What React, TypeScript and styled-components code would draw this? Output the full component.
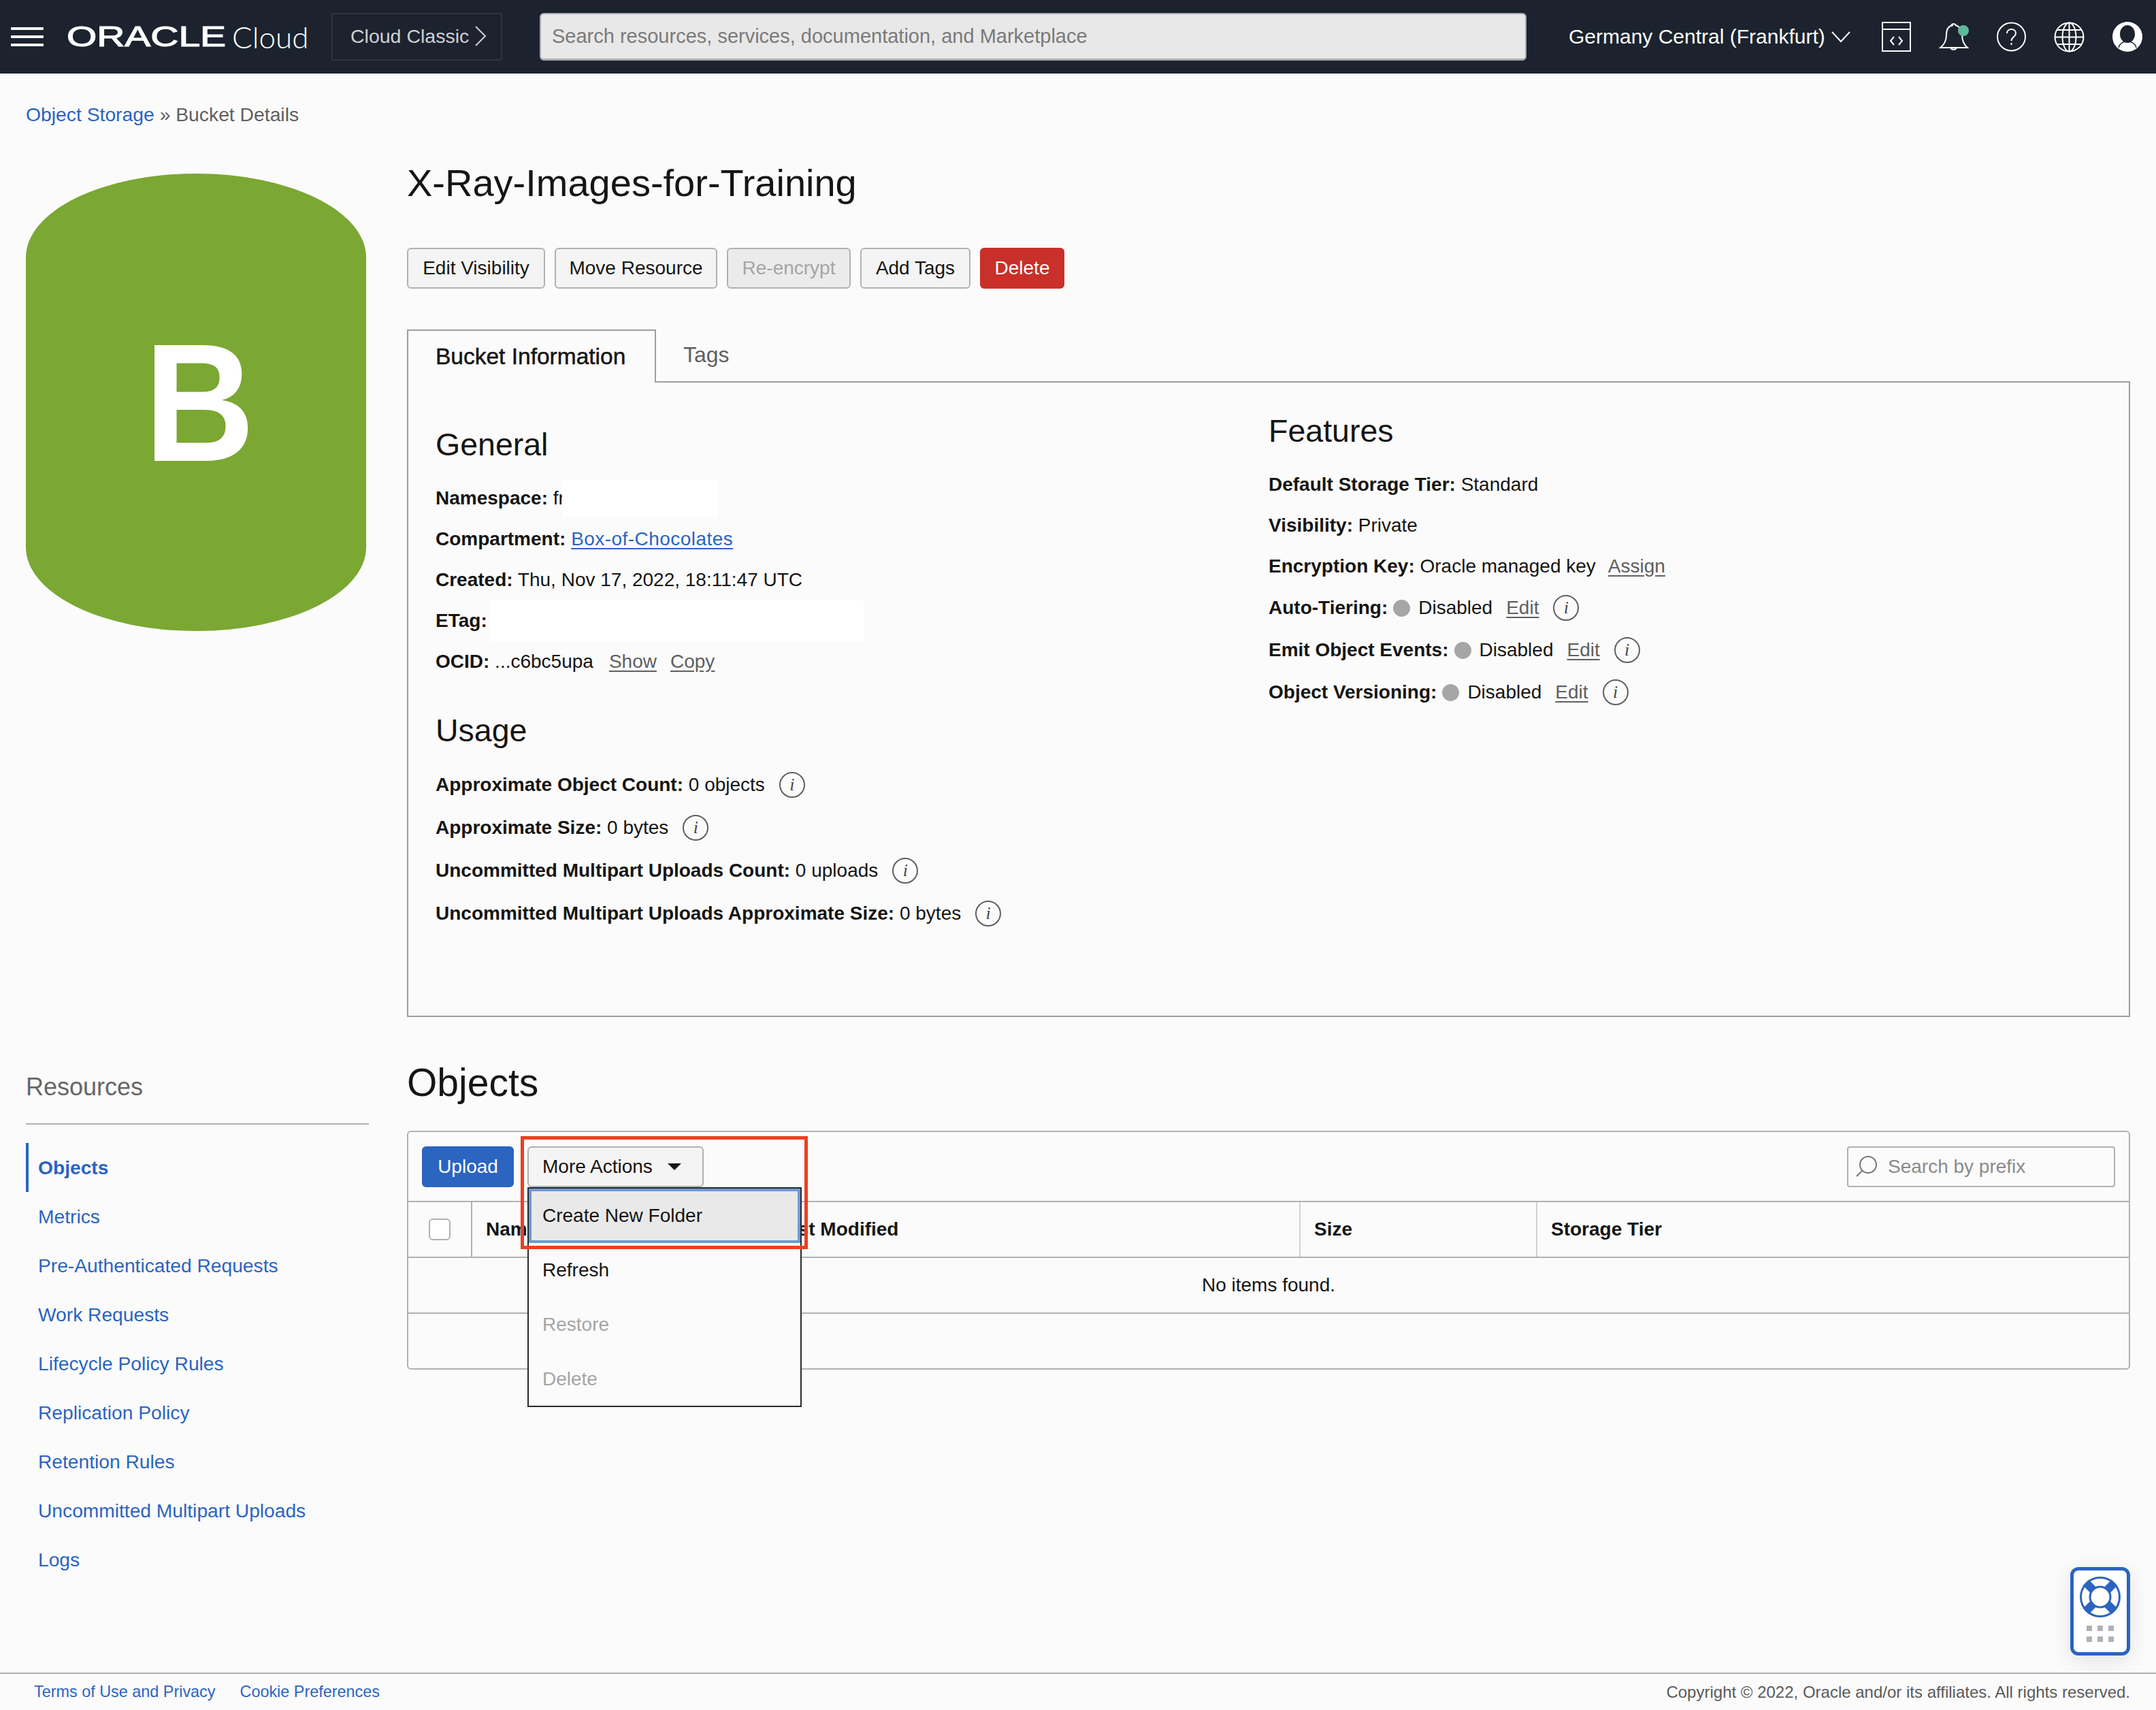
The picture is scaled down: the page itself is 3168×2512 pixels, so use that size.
import styled, { createGlobalStyle } from 'styled-components'

const GlobalStyle = createGlobalStyle`
  html, body {
    margin: 0;
    padding: 0;
    background: #fbfbfb;
  }
  body {
    font-family: "Liberation Sans", Arial, sans-serif;
    font-size: 28px;
    color: #161513;
  }
  * {
    box-sizing: border-box;
  }
`

const Page = styled.div`
  width: 3168px;
  height: 2512px;
  display: flex;
  flex-direction: column;
  position: relative;
  overflow: hidden;
`

const Header = styled.header`
  height: 108px;
  flex: none;
  background: #1c232e;
  display: flex;
  align-items: center;
  padding-left: 16px;
  color: #fff;
`

const Hamburger = styled.div`
  width: 48px;
  height: 28px;
  display: flex;
  flex-direction: column;
  justify-content: space-between;
  margin-right: 34px;

  span {
    display: block;
    height: 4px;
    border-radius: 1px;
    background: #fff;
  }
`

const Logo = styled.div`
  width: 243px;
  flex: none;

  span {
    display: inline-block;
    font-size: 42px;
    line-height: 42px;
    -webkit-text-stroke: 1.2px #fff;
    transform: scale(1.355, 1);
    transform-origin: left center;
  }
`

const LogoCloud = styled.div`
  width: 146px;
  flex: none;
  font-size: 44px;
  line-height: 44px;
  font-family: "Lato", "Liberation Sans", sans-serif;
  font-weight: 300;
`

const ClassicButton = styled.div`
  width: 251px;
  height: 70px;
  flex: none;
  border: 2px solid #2e3440;
  border-radius: 3px;
  display: flex;
  align-items: center;
  gap: 8px;
  padding-left: 26px;
  padding-bottom: 2px;
  font-size: 28.500px;
  color: #cfd0d2;
  margin-right: 55px;
`

const GlobalSearch = styled.input`
  width: 1450px;
  height: 70px;
  flex: none;
  background: #e8e8e8;
  border: 2px solid #a9adb3;
  border-bottom-width: 3px;
  border-radius: 6px;
  padding: 0 16px;
  font-family: inherit;
  font-size: 29px;
  margin-right: 62px;

  &::placeholder {
    color: #7a7a7a;
    opacity: 1;
  }
`

const Region = styled.div`
  display: flex;
  align-items: center;
  gap: 8px;
  font-size: 30px;
  white-space: nowrap;
  width: 460px;
  flex: none;
`

const HeaderIcon = styled.svg`
  flex: none;
  display: block;
`

const IconRow = styled.div`
  display: flex;
  align-items: center;
  gap: 41px;
`

const BellWrap = styled.div`
  position: relative;
  width: 44px;
  height: 46px;
`

const BellDot = styled.span`
  position: absolute;
  right: 0;
  top: 6px;
  width: 16px;
  height: 16px;
  border-radius: 50%;
  background: #5db89c;
`

const Crumbs = styled.div`
  height: 120px;
  flex: none;
  display: flex;
  align-items: center;
  padding-left: 38px;
  color: #5f5f5f;
  white-space: pre;
  font-size: 28.300px;
`

const Link = styled.a<{ $tone?: 'blue' | 'grey'; $under?: boolean; $gap?: number }>`
  color: ${props => (props.$tone === 'grey' ? '#5f5f5f' : '#2b64c1')};
  text-decoration: ${props => (props.$under ? 'underline' : 'none')};
  text-underline-offset: 4px;
  margin-left: ${props => props.$gap ?? 0}px;
`

const CompartmentLink = styled(Link)`
  letter-spacing: 0.45px;
`

const Columns = styled.div`
  flex: 1;
  display: flex;
  min-height: 0;
`

const Side = styled.aside`
  width: 598px;
  flex: none;
  padding-left: 38px;
`

const Cylinder = styled.div`
  width: 500px;
  height: 672px;
  margin-top: 27px;
  background: #7ba733;
  border-radius: 250px / 123px;
  display: flex;
  align-items: center;
  justify-content: center;
  color: #fff;
  font-size: 247px;
  font-weight: 700;
  line-height: 1;
  padding-left: 10px;

  span {
    display: block;
    transform: scaleX(0.91);
  }
`

const ResourcesTitle = styled.div`
  margin-top: 645px;
  width: 504px;
  height: 80px;
  padding-bottom: 28px;
  border-bottom: 2px solid #aeb1b6;
  display: flex;
  align-items: center;
  font-size: 36px;
  color: #666;
`

const SideNav = styled.nav`
  margin-top: 27px;
  display: flex;
  flex-direction: column;
`

const SideItem = styled.a<{ $active?: boolean }>`
  height: 72px;
  display: flex;
  align-items: center;
  padding-left: 14px;
  border-left: 4px solid ${props => (props.$active ? '#2b64c1' : 'transparent')};
  color: #2b64c1;
  font-size: 28.200px;
  font-weight: ${props => (props.$active ? 700 : 400)};
`

const Main = styled.main`
  width: 2532px;
  flex: none;
`

const PageTitle = styled.h1`
  margin: 0;
  height: 80px;
  display: flex;
  align-items: center;
  font-size: 56px;
  font-weight: 400;
`

const Actions = styled.div`
  margin-top: 56px;
  display: flex;
  gap: 14px;
`

const Button = styled.button<{ $kind?: 'plain' | 'danger' | 'primary' | 'disabled'; $w: number }>`
  width: ${props => props.$w}px;
  height: 60px;
  flex: none;
  padding: 0;
  font-family: inherit;
  font-size: 28px;
  border-radius: 6px;
  border: 2px solid
    ${props =>
      props.$kind === 'danger' ? '#c9302a' : props.$kind === 'primary' ? '#2b64c1' : '#aeb1b6'};
  background: ${props =>
    props.$kind === 'danger'
      ? '#c9302a'
      : props.$kind === 'primary'
        ? '#2b64c1'
        : props.$kind === 'disabled'
          ? '#ebebeb'
          : '#f4f4f4'};
  color: ${props =>
    props.$kind === 'danger' || props.$kind === 'primary'
      ? '#fff'
      : props.$kind === 'disabled'
        ? '#a5a5a5'
        : '#161513'};
`

const Tabs = styled.div`
  margin-top: 60px;
  height: 78px;
  display: flex;
`

const ActiveTab = styled.div`
  width: 366px;
  height: 78px;
  border: 2px solid #9e9e9e;
  border-bottom: 0;
  display: flex;
  align-items: center;
  padding-left: 40px;
  font-size: 33.500px;
  -webkit-text-stroke: 0.5px #161513;
  position: relative;
  z-index: 1;
  background: #fbfbfb;
`

const IdleTab = styled.div`
  flex: 1;
  border-bottom: 2px solid #9e9e9e;
  display: flex;
  align-items: center;
  padding: 0 0 2px 40px;
  font-size: 32px;
  color: #5f5f5f;
`

const Panel = styled.section`
  height: 932px;
  border: 2px solid #9e9e9e;
  border-top: 0;
  display: grid;
  grid-template-columns: 1224px 1fr;
  padding-left: 40px;
`

const Col = styled.div<{ $top: number }>`
  padding-top: ${props => props.$top}px;
`

const SectionTitle = styled.h3<{ $top?: number }>`
  margin: ${props => props.$top ?? 0}px 0 0;
  height: 60px;
  display: flex;
  align-items: center;
  font-size: 46.500px;
  font-weight: 400;
`

const Rows = styled.div<{ $top: number }>`
  margin-top: ${props => props.$top}px;
`

const Row = styled.div<{ $h: number }>`
  height: ${props => props.$h}px;
  display: flex;
  align-items: center;
  position: relative;
`

const RowText = styled.span`
  white-space: pre;
`

const Mask = styled.span<{ $left: number; $w: number; $h: number }>`
  position: absolute;
  left: ${props => props.$left}px;
  width: ${props => props.$w}px;
  height: ${props => props.$h}px;
  top: 50%;
  transform: translateY(-50%);
  background: #fff;
`

const Dot = styled.span`
  width: 25px;
  height: 25px;
  border-radius: 50%;
  background: #a6a6a6;
  margin: 0 12px 0 8px;
  flex: none;
`

const Info = styled.span`
  width: 38px;
  height: 38px;
  border: 2px solid #5f5f5f;
  border-radius: 50%;
  margin-left: 21px;
  display: inline-flex;
  align-items: center;
  justify-content: center;
  font-family: "Liberation Serif", serif;
  font-style: italic;
  font-size: 26px;
  color: #444;
  flex: none;
`

const ObjectsTitle = styled.h2`
  margin: 56px 0 0;
  height: 80px;
  display: flex;
  align-items: center;
  font-size: 57px;
  font-weight: 400;
`

const Card = styled.section`
  margin-top: 31px;
  height: 351px;
  border: 2px solid #aeb1b6;
  border-radius: 6px;
`

const Toolbar = styled.div`
  height: 103px;
  border-bottom: 2px solid #aeb1b6;
  display: flex;
  align-items: center;
  gap: 20px;
  padding: 0 20px;
`

const MenuAnchor = styled.div`
  position: relative;
  z-index: 3;
`

const MoreButton = styled(Button)`
  display: flex;
  align-items: center;
  justify-content: flex-start;
  gap: 22px;
  padding-left: 20px;
`

const Caret = styled.span`
  width: 0;
  height: 0;
  border-left: 10px solid transparent;
  border-right: 10px solid transparent;
  border-top: 10px solid #161513;
`

const Menu = styled.div`
  position: absolute;
  left: 0;
  top: 60px;
  width: 403px;
  height: 323px;
  background: #fbfbfb;
  border: 2px solid #2a2a2a;
`

const MenuItem = styled.div<{ $focus?: boolean; $off?: boolean }>`
  height: 80px;
  display: flex;
  align-items: center;
  padding-left: ${props => (props.$focus ? 16 : 20)}px;
  background: ${props => (props.$focus ? '#e9e9e9' : 'transparent')};
  border: ${props => (props.$focus ? '4px solid #6f97d6' : '0')};
  color: ${props => (props.$off ? '#a5a5a5' : '#161513')};
`

const Callout = styled.div`
  position: absolute;
  left: -10px;
  top: -15px;
  width: 422px;
  height: 166px;
  border: 5px solid #ea4020;
  pointer-events: none;
`

const PrefixSearch = styled.div`
  margin-left: auto;
  width: 394px;
  height: 60px;
  border: 2px solid #aeb1b6;
  border-radius: 4px;
  display: flex;
  align-items: center;
  gap: 14px;
  padding-left: 10px;
  color: #8a8a8a;
`

const TableHead = styled.div`
  height: 82px;
  border-bottom: 2px solid #aeb1b6;
  display: grid;
  grid-template-columns: 94px 426px 791px 348px 1fr;
  font-weight: 700;
`

const HeadCell = styled.div`
  display: flex;
  align-items: center;
  padding-left: 20px;
  border-right: 2px solid #d0d2d5;

  &:last-child {
    border-right: 0;
  }
`

const CheckCell = styled(HeadCell)`
  justify-content: center;
  padding-left: 0;
  border-right-color: #aeb1b6;
`

const Checkbox = styled.span`
  width: 32px;
  height: 32px;
  border: 2px solid #aeb1b6;
  border-radius: 6px;
  background: #fff;
`

const EmptyRow = styled.div`
  height: 82px;
  border-bottom: 2px solid #aeb1b6;
  display: flex;
  align-items: center;
  justify-content: center;
`

const Footer = styled.footer`
  height: 55px;
  flex: none;
  border-top: 2px solid #aeb1b6;
  display: flex;
  align-items: center;
  gap: 36px;
  padding: 0 38px 0 50px;
  font-size: 23.400px;
  color: #5a5a5a;
`

const Copyright = styled.span`
  margin-left: auto;
  font-size: 24px;
`

const HelpWidget = styled.div`
  position: absolute;
  left: 3042px;
  top: 2302px;
  width: 88px;
  height: 130px;
  background: #fff;
  border: 5px solid #2b64c1;
  border-radius: 12px;
  box-shadow: 0 8px 30px rgba(0, 0, 0, 0.1);
  display: flex;
  flex-direction: column;
  align-items: center;
  padding-top: 9px;
`

const Grip = styled.div`
  margin-top: 12px;
  display: grid;
  grid-template-columns: repeat(3, 8px);
  gap: 8px;

  span {
    height: 8px;
    background: #aeb1b6;
  }
`

function CodeIcon() {
  return (
    <HeaderIcon width="43" height="44" viewBox="0 0 43 44" fill="none" stroke="#fff" strokeWidth="2">
      <rect x="1" y="1" width="41" height="42" />
      <path d="M1 11h41" />
      <path d="M18 22l-5 6 5 6M25 22l5 6-5 6" />
    </HeaderIcon>
  )
}

function BellIcon() {
  return (
    <HeaderIcon width="44" height="46" viewBox="0 0 44 46" fill="none" stroke="#fff" strokeWidth="2">
      <path d="M21 6c-7 1-10 7-10 14 0 8-2 14-9 19h40c-6-5-8-11-8-19 0-7-4-13-10-14" />
      <path d="M18 6a4 4 0 0 1 7 0M17 39a5 5 0 0 0 9 0" />
    </HeaderIcon>
  )
}

function HelpIcon() {
  return (
    <HeaderIcon width="43" height="44" viewBox="0 0 43 44" fill="none" stroke="#fff" strokeWidth="2">
      <circle cx="21.5" cy="22" r="20.5" />
      <path d="M15 17c0-4 3-6 6.500-6s6.500 2 6.500 6c0 5-6.500 5-6.500 11" />
      <path d="M21.500 31v3" />
    </HeaderIcon>
  )
}

function GlobeIcon() {
  return (
    <HeaderIcon width="45" height="45" viewBox="0 0 45 45" fill="none" stroke="#fff" strokeWidth="2">
      <circle cx="22.500" cy="22.500" r="21" />
      <ellipse cx="22.500" cy="22.500" rx="10" ry="21" />
      <path d="M22.500 1.500v42M1.500 22.500h42M4.500 12h36M4.500 33h36" />
    </HeaderIcon>
  )
}

function UserIcon() {
  return (
    <HeaderIcon width="44" height="44" viewBox="0 0 44 44">
      <circle cx="22" cy="22" r="22" fill="#fff" />
      <ellipse cx="22" cy="18" rx="11" ry="13" fill="#1c232e" />
      <path d="M9 38c2-7 8-9 13-9s11 2 13 9" fill="none" stroke="#1c232e" strokeWidth="1.500" />
    </HeaderIcon>
  )
}

function Lifebuoy() {
  return (
    <svg width="60" height="60" viewBox="0 0 60 60" fill="none" stroke="#2b64c1">
      <path d="M9 9l42 42M51 9L9 51" strokeWidth="12" />
      <circle cx="30" cy="30" r="28.500" strokeWidth="3" />
      <circle cx="30" cy="30" r="15" strokeWidth="3" fill="#fff" />
    </svg>
  )
}

function Magnifier() {
  return (
    <svg width="34" height="34" viewBox="0 0 34 34" fill="none" stroke="#777" strokeWidth="2">
      <circle cx="19" cy="14" r="12" />
      <path d="M10.500 22.500L2 31" />
    </svg>
  )
}

const features = [
  { label: 'Auto-Tiering:' },
  { label: 'Emit Object Events:' },
  { label: 'Object Versioning:' },
]

const usage = [
  { label: 'Approximate Object Count:', value: '0 objects' },
  { label: 'Approximate Size:', value: '0 bytes' },
  { label: 'Uncommitted Multipart Uploads Count:', value: '0 uploads' },
  { label: 'Uncommitted Multipart Uploads Approximate Size:', value: '0 bytes' },
]

const resources = [
  'Objects',
  'Metrics',
  'Pre-Authenticated Requests',
  'Work Requests',
  'Lifecycle Policy Rules',
  'Replication Policy',
  'Retention Rules',
  'Uncommitted Multipart Uploads',
  'Logs',
]

export default function App() {
  return (
    <Page>
      <GlobalStyle />
      <Header>
        <Hamburger>
          <span />
          <span />
          <span />
        </Hamburger>
        <Logo>
          <span>ORACLE</span>
        </Logo>
        <LogoCloud>Cloud</LogoCloud>
        <ClassicButton>
          Cloud Classic
          <svg width="18" height="30" viewBox="0 0 18 30" fill="none" stroke="#cfd0d2" strokeWidth="2">
            <path d="M2 1l14 14L2 29" />
          </svg>
        </ClassicButton>
        <GlobalSearch placeholder="Search resources, services, documentation, and Marketplace" />
        <Region>
          Germany Central (Frankfurt)
          <svg width="30" height="18" viewBox="0 0 30 18" fill="none" stroke="#fff" strokeWidth="2">
            <path d="M2 2l13 14L28 2" />
          </svg>
        </Region>
        <IconRow>
          <CodeIcon />
          <BellWrap>
            <BellIcon />
            <BellDot />
          </BellWrap>
          <HelpIcon />
          <GlobeIcon />
          <UserIcon />
        </IconRow>
      </Header>

      <Crumbs>
        <Link>Object Storage</Link> » Bucket Details
      </Crumbs>

      <Columns>
        <Side>
          <Cylinder>
            <span>B</span>
          </Cylinder>
          <ResourcesTitle>Resources</ResourcesTitle>
          <SideNav>
            {resources.map((item, i) => (
              <SideItem key={item} $active={i === 0}>
                {item}
              </SideItem>
            ))}
          </SideNav>
        </Side>

        <Main>
          <PageTitle>X-Ray-Images-for-Training</PageTitle>
          <Actions>
            <Button $w={203}>Edit Visibility</Button>
            <Button $w={239}>Move Resource</Button>
            <Button $w={182} $kind="disabled">Re-encrypt</Button>
            <Button $w={162}>Add Tags</Button>
            <Button $w={124} $kind="danger">Delete</Button>
          </Actions>

          <Tabs>
            <ActiveTab>Bucket Information</ActiveTab>
            <IdleTab>Tags</IdleTab>
          </Tabs>
          <Panel>
            <Col $top={61}>
              <SectionTitle>General</SectionTitle>
              <Rows $top={19}>
                <Row $h={60}>
                  <RowText>
                    <b>Namespace:</b> fr
                  </RowText>
                  <Mask $left={186} $w={229} $h={54} />
                </Row>
                <Row $h={60}>
                  <RowText>
                    <b>Compartment:</b> <CompartmentLink $under>Box-of-Chocolates</CompartmentLink>
                  </RowText>
                </Row>
                <Row $h={60}>
                  <RowText>
                    <b>Created:</b> Thu, Nov 17, 2022, 18:11:47 UTC
                  </RowText>
                </Row>
                <Row $h={60}>
                  <RowText>
                    <b>ETag:</b>
                  </RowText>
                  <Mask $left={80} $w={549} $h={61} />
                </Row>
                <Row $h={60}>
                  <RowText>
                    <b>OCID:</b> ...c6bc5upa
                    <Link $tone="grey" $under $gap={23}>Show</Link>
                    <Link $tone="grey" $under $gap={20}>Copy</Link>
                  </RowText>
                </Row>
              </Rows>
              <SectionTitle $top={41}>Usage</SectionTitle>
              <Rows $top={18}>
                {usage.map(row => (
                  <Row $h={63} key={row.label}>
                    <RowText>
                      <b>{row.label}</b> {row.value}
                    </RowText>
                    <Info>i</Info>
                  </Row>
                ))}
              </Rows>
            </Col>
            <Col $top={41}>
              <SectionTitle>Features</SectionTitle>
              <Rows $top={19}>
                <Row $h={60}>
                  <RowText>
                    <b>Default Storage Tier:</b> Standard
                  </RowText>
                </Row>
                <Row $h={60}>
                  <RowText>
                    <b>Visibility:</b> Private
                  </RowText>
                </Row>
                <Row $h={60}>
                  <RowText>
                    <b>Encryption Key:</b> Oracle managed key
                    <Link $tone="grey" $under $gap={18}>Assign</Link>
                  </RowText>
                </Row>
                {features.map(row => (
                  <Row $h={62} key={row.label}>
                    <b>{row.label}</b>
                    <Dot />
                    <RowText>
                      Disabled
                      <Link $tone="grey" $under $gap={20}>Edit</Link>
                    </RowText>
                    <Info>i</Info>
                  </Row>
                ))}
              </Rows>
            </Col>
          </Panel>

          <ObjectsTitle>Objects</ObjectsTitle>
          <Card>
            <Toolbar>
              <Button $w={135} $kind="primary">Upload</Button>
              <MenuAnchor>
                <MoreButton $w={259}>
                  More Actions
                  <Caret />
                </MoreButton>
                <Menu>
                  <MenuItem $focus>Create New Folder</MenuItem>
                  <MenuItem>Refresh</MenuItem>
                  <MenuItem $off>Restore</MenuItem>
                  <MenuItem $off>Delete</MenuItem>
                </Menu>
                <Callout />
              </MenuAnchor>
              <PrefixSearch>
                <Magnifier />
                Search by prefix
              </PrefixSearch>
            </Toolbar>
            <TableHead>
              <CheckCell>
                <Checkbox />
              </CheckCell>
              <HeadCell>Name</HeadCell>
              <HeadCell>Last Modified</HeadCell>
              <HeadCell>Size</HeadCell>
              <HeadCell>Storage Tier</HeadCell>
            </TableHead>
            <EmptyRow>No items found.</EmptyRow>
          </Card>
        </Main>
      </Columns>

      <Footer>
        <Link>Terms of Use and Privacy</Link>
        <Link>Cookie Preferences</Link>
        <Copyright>Copyright © 2022, Oracle and/or its affiliates. All rights reserved.</Copyright>
      </Footer>

      <HelpWidget>
        <Lifebuoy />
        <Grip>
          <span />
          <span />
          <span />
          <span />
          <span />
          <span />
        </Grip>
      </HelpWidget>
    </Page>
  )
}
